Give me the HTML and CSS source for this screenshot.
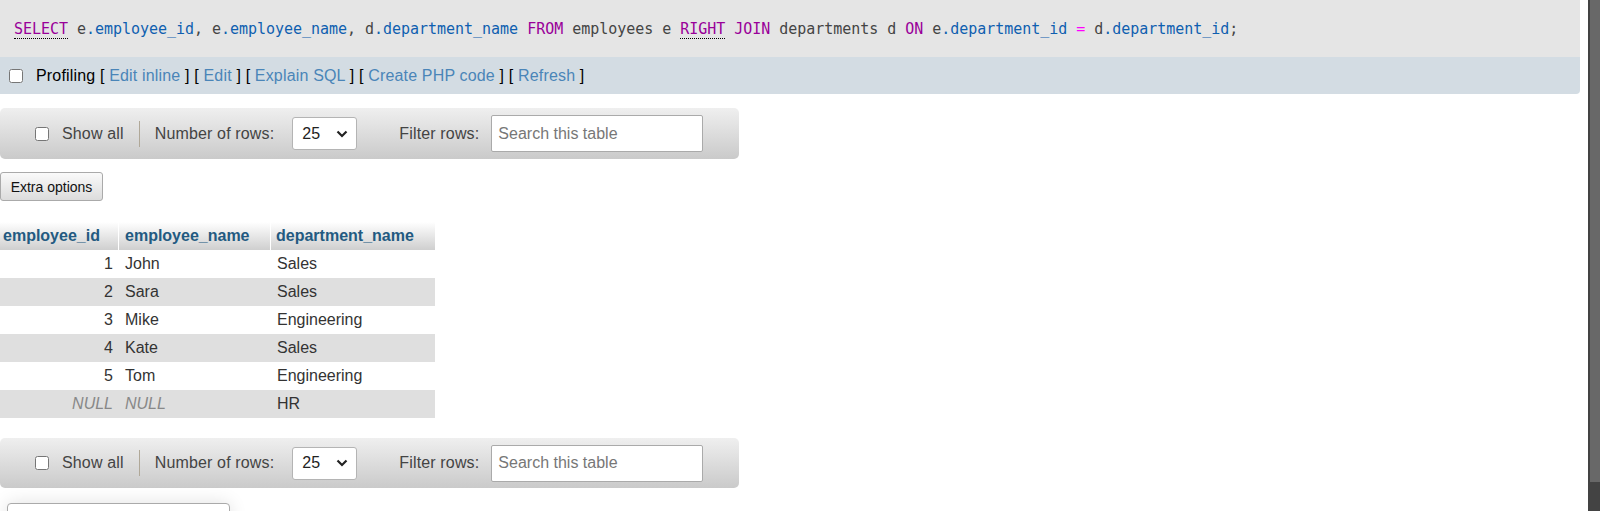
FILE: index.html
```html
<!DOCTYPE html>
<html>
<head>
<meta charset="utf-8">
<link rel="stylesheet" href="styles.css">
</head>
<body>
<div class="page">
  <div class="sqlbox"><code class="sql"><a class="kw doc">SELECT</a> e<span class="var">.employee_id</span>, e<span class="var">.employee_name</span>, d<span class="var">.department_name</span> <span class="kw">FROM</span> employees e <a class="kw doc">RIGHT</a> <span class="kw">JOIN</span> departments d <span class="kw">ON</span> e<span class="var">.department_id</span> <span class="op">=</span> d<span class="var">.department_id</span>;</code></div>
  <div class="profbar">
    <input type="checkbox" class="chk">
    <span class="proftext">Profiling [ <a class="lnk">Edit inline</a> ] [ <a class="lnk">Edit</a> ] [ <a class="lnk">Explain SQL</a> ] [ <a class="lnk">Create PHP code</a> ] [ <a class="lnk">Refresh</a> ]</span>
  </div>

  <div class="navbar">
    <input type="checkbox" class="chk">
    <span class="lbl showall">Show all</span>
    <span class="sep"></span>
    <span class="lbl">Number of rows:</span>
    <div class="select"><span>25</span><svg width="12" height="8" viewBox="0 0 12 8"><path d="M1.5 1.5 L6 6 L10.5 1.5" fill="none" stroke="#222" stroke-width="2.2"/></svg></div>
    <span class="lbl filter">Filter rows:</span>
    <input class="search" type="text" placeholder="Search this table">
  </div>

  <button class="extra">Extra options</button>

  <table class="results">
    <thead>
      <tr><th class="c1">employee_id</th><th class="c2">employee_name</th><th class="c3">department_name</th></tr>
    </thead>
    <tbody>
      <tr><td class="num">1</td><td>John</td><td>Sales</td></tr>
      <tr><td class="num">2</td><td>Sara</td><td>Sales</td></tr>
      <tr><td class="num">3</td><td>Mike</td><td>Engineering</td></tr>
      <tr><td class="num">4</td><td>Kate</td><td>Sales</td></tr>
      <tr><td class="num">5</td><td>Tom</td><td>Engineering</td></tr>
      <tr><td class="num null">NULL</td><td class="null">NULL</td><td>HR</td></tr>
    </tbody>
  </table>

  <div class="navbar bottom">
    <input type="checkbox" class="chk">
    <span class="lbl showall">Show all</span>
    <span class="sep"></span>
    <span class="lbl">Number of rows:</span>
    <div class="select"><span>25</span><svg width="12" height="8" viewBox="0 0 12 8"><path d="M1.5 1.5 L6 6 L10.5 1.5" fill="none" stroke="#222" stroke-width="2.2"/></svg></div>
    <span class="lbl filter">Filter rows:</span>
    <input class="search" type="text" placeholder="Search this table">
  </div>

  <div class="opsbox"></div>
</div>
<div class="scrollbar"><div class="thumb"></div></div>
</body>
</html>
```
FILE: styles.css
```css
html, body {
  margin: 0;
  padding: 0;
  height: 511px;
  overflow: hidden;
  background: #fff;
}
body {
  display: flex;
  font-family: "Liberation Sans", Arial, sans-serif;
  font-size: 16px;
  color: #333;
}
.page {
  flex: 1;
  min-width: 0;
  overflow: hidden;
}
.scrollbar {
  width: 12px;
  background: #434343;
  flex: none;
}
.thumb {
  margin-left: 2px;
  height: 482px;
  background: #686868;
}
.sqlbox {
  margin-right: 8px;
  height: 57px;
  background: #e5e5e5;
  display: flex;
  align-items: center;
  padding-left: 14px;
}
.sql {
  font-family: "DejaVu Sans Mono", monospace;
  font-size: 15px;
  color: #444;
  white-space: pre;
  letter-spacing: -0.03px;
}
.kw { color: #909; }
.var { color: #0f5fb0; }
.op { color: #f0f; }
.doc {
  text-decoration: none;
  border-bottom: 1px dotted #000;
}
.profbar {
  margin-right: 8px;
  height: 37px;
  background: #d3dce3;
  border-bottom-right-radius: 4px;
  display: flex;
  align-items: center;
  padding-left: 9px;
}
.chk {
  margin: 0;
  width: 14px;
  height: 14px;
}
.proftext {
  margin-left: 13px;
  color: #000;
  letter-spacing: 0.17px;
}
.lnk {
  color: #4a85b8;
  text-decoration: none;
}
.navbar {
  margin-top: 14px;
  width: 739px;
  height: 51px;
  box-sizing: border-box;
  border-radius: 5px;
  background: linear-gradient(#efefef, #cacaca);
  display: flex;
  align-items: center;
  padding-left: 35px;
}
.navbar.bottom {
  margin-top: 20px;
  height: 50px;
}
.lbl { color: #444; white-space: nowrap; letter-spacing: 0.15px; }
.showall { margin-left: 13px; }
.sep {
  width: 1px;
  height: 26px;
  background: #b0a898;
  margin: 0 15px;
}
.select {
  margin-left: 18px;
  width: 65px;
  height: 33px;
  box-sizing: border-box;
  background: #fff;
  border: 1px solid #b4b4b4;
  border-radius: 3px;
  display: flex;
  align-items: center;
  justify-content: space-between;
  padding: 0 8px 0 9px;
  color: #222;
}
.filter { margin-left: 42px; }
.search {
  margin: 0 0 0 12px;
  width: 212px;
  height: 37px;
  box-sizing: border-box;
  border: 1px solid #aaa;
  border-radius: 2px;
  padding: 0 6px;
  font-family: "Liberation Sans", Arial, sans-serif;
  font-size: 16px;
  background: #fff;
}
.search::placeholder { color: #777; }
.extra {
  display: block;
  margin: 13px 0 0 0;
  height: 29px;
  width: 103px;
  padding: 0;
  border: 1px solid #aaa;
  border-radius: 3px;
  background: linear-gradient(#fafafa, #dcdcdc);
  font-family: "Liberation Sans", Arial, sans-serif;
  font-size: 14px;
  color: #111;
}
.results {
  margin-top: 21px;
  border-collapse: separate;
  border-spacing: 0;
}
.results th {
  height: 28px;
  box-sizing: border-box;
  padding: 0 5px;
  text-align: left;
  font-weight: bold;
  color: #235a81;
  background: linear-gradient(#ffffff, #cfcfcf);
  border-right: 1px solid #fff;
}
.results th.c1 { width: 119px; padding-left: 3px; }
.results th.c2 { width: 152px; padding-left: 6px; }
.results th.c3 { width: 164px; border-right: 0; }
.results td {
  height: 28px;
  box-sizing: border-box;
  padding: 0 5px 0 6px;
  color: #333;
}
.results tbody tr:nth-child(even) td { background: #dfdfdf; }
.results td.num { text-align: right; padding-right: 6px; }
.results td.null { font-style: italic; color: #888; }
.opsbox {
  margin: 15px 0 0 7px;
  width: 221px;
  height: 40px;
  border: 1px solid #aaa;
  border-radius: 4px 4px 0 0;
  background: #fff;
  box-shadow: 0 0 18px rgba(0,0,0,0.12);
}
```
